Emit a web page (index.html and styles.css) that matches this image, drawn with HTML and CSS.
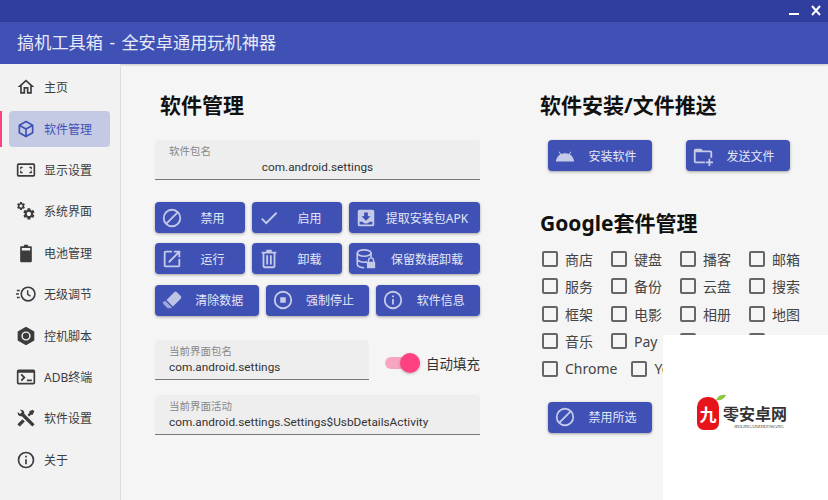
FILE: index.html
```html
<!DOCTYPE html>
<html lang="zh-CN">
<head>
  <meta charset="UTF-8">
  <title>搞机工具箱</title>
  <link rel="stylesheet" href="styles.css">
</head>
<body>

  <svg class="sprite" aria-hidden="true">
    <symbol id="i-home" viewBox="0 0 24 24"><path d="M12 5.69l5 4.5V18h-2v-6H9v6H7v-7.81l5-4.5M12 3L2 12h3v8h6v-6h2v6h6v-8h3L12 3z"/></symbol>
    <symbol id="i-cube" viewBox="0 0 24 24"><path d="M21,16.5C21,16.88 20.79,17.21 20.47,17.38L12.57,21.82C12.41,21.94 12.21,22 12,22C11.79,22 11.59,21.94 11.43,21.82L3.53,17.38C3.21,17.21 3,16.88 3,16.5V7.5C3,7.12 3.21,6.79 3.53,6.62L11.43,2.18C11.59,2.06 11.79,2 12,2C12.21,2 12.41,2.06 12.57,2.18L20.47,6.62C20.79,6.79 21,7.12 21,7.5V16.5M12,4.15L6.04,7.5L12,10.85L17.96,7.5L12,4.15M5,15.91L11,19.29V12.58L5,9.21V15.91M19,15.91V9.21L13,12.58V19.29L19,15.91Z"/></symbol>
    <symbol id="i-screen" viewBox="0 0 24 24"><path d="M3 4h18a2 2 0 0 1 2 2v12a2 2 0 0 1-2 2H3a2 2 0 0 1-2-2V6a2 2 0 0 1 2-2zm0 2v12h18V6H3z"/><path d="M5 8h3v1.500H6.500V11H5zM19 8h-3v1.500h1.500V11H19zM5 16h3v-1.500H6.500V13H5zM19 16h-3v-1.500h1.500V13H19z"/></symbol>
    <symbol id="i-cog" viewBox="0 0 24 24"><path d="M19.140 12.940c.04-.3.06-.61.06-.94 0-.32-.02-.64-.07-.94l2.030-1.580a.49.49 0 0 0 .12-.61l-1.920-3.320a.488.488 0 0 0-.59-.22l-2.390.96c-.5-.38-1.030-.7-1.620-.94l-.36-2.540a.484.484 0 0 0-.48-.41h-3.840c-.24 0-.43.17-.47.41l-.36 2.540c-.59.24-1.130.57-1.620.94l-2.390-.96c-.22-.08-.47 0-.59.22L2.740 8.870c-.12.21-.08.47.12.61l2.030 1.580c-.05.3-.09.63-.09.94s.02.64.07.94l-2.030 1.580a.49.49 0 0 0-.12.61l1.920 3.320c.12.22.37.29.59.22l2.390-.96c.5.38 1.030.7 1.620.94l.36 2.540c.05.24.24.41.48.41h3.840c.24 0 .44-.17.47-.41l.36-2.540c.59-.24 1.130-.56 1.620-.94l2.390.96c.22.08.47 0 .59-.22l1.920-3.320c.12-.22.07-.47-.12-.61l-2.010-1.580zM12 15.600c-1.980 0-3.600-1.620-3.600-3.600s1.620-3.600 3.600-3.600 3.600 1.620 3.600 3.600-1.620 3.600-3.600 3.600z"/></symbol>
    <symbol id="i-cogs" viewBox="0 0 24 24"><use href="#i-cog" x="0" y="0" width="12" height="12"/><use href="#i-cog" x="7" y="7" width="17" height="17"/></symbol>
    <symbol id="i-battery" viewBox="0 0 24 24"><path d="M9.500 2h5v2H18a1 1 0 0 1 1 1v17a1 1 0 0 1-1 1H6a1 1 0 0 1-1-1V5a1 1 0 0 1 1-1h3.500zM7 6v3h10V6z"/></symbol>
    <symbol id="i-timer" viewBox="0 0 24 24"><circle cx="14.500" cy="12" r="8.200" fill="none" stroke="currentColor" stroke-width="1.900"/><path d="M14 7.500v5l3.500 2.200" fill="none" stroke="currentColor" stroke-width="1.700"/><path d="M1 7h3.500v1.800H1zM0 11.100h3.500v1.800H0zM1 15.200h3.500V17H1z"/></symbol>
    <symbol id="i-hex" viewBox="0 0 24 24"><path d="M12 1l10 5.500v11L12 23 2 17.500v-11zm0 5.500a5.500 5.500 0 1 0 0 11 5.500 5.500 0 0 0 0-11z"/><circle cx="12" cy="12" r="3.800"/></symbol>
    <symbol id="i-console" viewBox="0 0 24 24"><path d="M3 3h18a2 2 0 0 1 2 2v14a2 2 0 0 1-2 2H3a2 2 0 0 1-2-2V5a2 2 0 0 1 2-2zm0 4v12h18V7z"/><path d="M5.500 9.500L7 8l4.500 4.500L7 17l-1.500-1.500 3-3zM13 15h6v2h-6z"/></symbol>
    <symbol id="i-tools" viewBox="0 0 24 24"><path d="M21.710 20.290L20.290 21.710A1 1 0 0 1 18.880 21.710L7 9.850A3.810 3.810 0 0 1 6 10A4 4 0 0 1 2.220 4.700L4.760 7.240L5.290 6.710L6.710 5.290L7.240 4.760L4.700 2.220A4 4 0 0 1 10 6A3.810 3.810 0 0 1 9.850 7L21.710 18.880A1 1 0 0 1 21.710 20.290M2.290 18.880A1 1 0 0 0 2.290 20.290L3.710 21.710A1 1 0 0 0 5.120 21.710L10.590 16.250L7.760 13.420M20 2L16 4V6L13.830 8.170L15.830 10.170L18 8H20L22 4Z"/></symbol>
    <symbol id="i-info" viewBox="0 0 24 24"><path d="M11 7h2v2h-2zm0 4h2v6h-2zm1-9a10 10 0 1 0 0 20 10 10 0 0 0 0-20zm0 18a8 8 0 1 1 0-16 8 8 0 0 1 0 16z"/></symbol>
    <symbol id="i-ban" viewBox="0 0 24 24"><path d="M12 2a10 10 0 1 0 0 20 10 10 0 0 0 0-20zM4 12c0-4.400 3.600-8 8-8 1.800 0 3.600.6 4.900 1.700L5.700 16.900C4.600 15.600 4 13.800 4 12zm8 8c-1.800 0-3.600-.6-4.900-1.700L18.300 7.100c1.100 1.300 1.700 3.100 1.700 4.900 0 4.400-3.600 8-8 8z"/></symbol>
    <symbol id="i-check" viewBox="0 0 24 24"><path d="M9 16.170L4.830 12l-1.420 1.410L9 19 21 7l-1.410-1.410z"/></symbol>
    <symbol id="i-tray" viewBox="0 0 24 24"><path fill-rule="evenodd" d="M5 3h14a2 2 0 0 1 2 2v14a2 2 0 0 1-2 2H5a2 2 0 0 1-2-2V5a2 2 0 0 1 2-2zm5 3v4H7l5 5 5-5h-3V6zM5 16v3h14v-3h-3c-.8 1.200-2.300 2-4 2s-3.200-.8-4-2z"/></symbol>
    <symbol id="i-open" viewBox="0 0 24 24"><path d="M19 19H5V5h7V3H5a2 2 0 0 0-2 2v14c0 1.100.9 2 2 2h14c1.100 0 2-.9 2-2v-7h-2v7zM14 3v2h3.590l-9.830 9.830 1.410 1.410L19 6.410V10h2V3h-7z"/></symbol>
    <symbol id="i-trash" viewBox="0 0 24 24"><path d="M9 2h6v2h5v2h-1v14a2 2 0 0 1-2 2H7a2 2 0 0 1-2-2V6H4V4h5zM7 6v14h10V6zm2 2h2v10H9zm4 0h2v10h-2z"/></symbol>
    <symbol id="i-dblock" viewBox="0 0 24 24"><ellipse cx="10" cy="5.500" rx="7.500" ry="3.500" fill="none" stroke="currentColor" stroke-width="1.800"/><path d="M2.500 5.500v12.500c0 1.900 3.400 3.500 7.500 3.500M2.500 12c0 1.900 3.400 3.500 7.500 3.500 1 0 2-.1 3-.3M17.500 5.500V10" fill="none" stroke="currentColor" stroke-width="1.800"/><path d="M14 15v-1.500a3.500 3.500 0 0 1 7 0V15h1v7H13v-7zm1.500 0h4v-1.500a2 2 0 0 0-4 0z"/></symbol>
    <symbol id="i-eraser" viewBox="0 0 24 24"><path d="M14.500 3.500a2 2 0 0 1 2.800 0l4.200 4.200a2 2 0 0 1 0 2.800L13 19l-7-7z" opacity=".95"/><path d="M5 13l6.800 6.800-1.200 1.200H8a2 2 0 0 1-1.400-.6l-4-4a2 2 0 0 1 0-2.800z" opacity=".7"/></symbol>
    <symbol id="i-stop" viewBox="0 0 24 24"><path d="M12 2a10 10 0 1 0 0 20 10 10 0 0 0 0-20zm0 18a8 8 0 1 1 0-16 8 8 0 0 1 0 16zM9 9h6v6H9z"/></symbol>
    <symbol id="i-android" viewBox="0 0 24 24"><path d="M2 18c.3-3.300 2-6 4.700-7.700L5.200 7.700l.8-.5 1.600 2.700A10.800 10.800 0 0 1 12 9c1.600 0 3 .3 4.400.9L18 7.200l.8.5-1.500 2.600C20 12 21.700 14.700 22 18z"/></symbol>
    <symbol id="i-folder" viewBox="0 0 24 24"><path d="M4 4h6l2 2h8a2 2 0 0 1 2 2v6h-2V8H4v10h10v2H4a2 2 0 0 1-2-2V6a2 2 0 0 1 2-2z"/><path d="M18 15h2v3h3v2h-3v3h-2v-3h-3v-2h3z"/></symbol>
  </svg>

  <div class="titlebar">
    <svg class="win-btn" viewBox="0 0 12 12"><path d="M1 9h10" /></svg>
    <svg class="win-btn" viewBox="0 0 12 12"><path d="M2 1l8 9M10 1l-8 9" /></svg>
  </div>
  <header class="appbar">搞机工具箱 - 全安卓通用玩机神器</header>

  <div class="app">
    <ul class="nav">
      <li class="nav-item"><a><svg class="nav-icon"><use href="#i-home"/></svg>主页</a></li>
      <li class="nav-item active"><a><svg class="nav-icon"><use href="#i-cube"/></svg>软件管理</a></li>
      <li class="nav-item"><a><svg class="nav-icon"><use href="#i-screen"/></svg>显示设置</a></li>
      <li class="nav-item"><a><svg class="nav-icon"><use href="#i-cogs"/></svg>系统界面</a></li>
      <li class="nav-item"><a><svg class="nav-icon"><use href="#i-battery"/></svg>电池管理</a></li>
      <li class="nav-item"><a><svg class="nav-icon"><use href="#i-timer"/></svg>无级调节</a></li>
      <li class="nav-item"><a><svg class="nav-icon"><use href="#i-hex"/></svg>控机脚本</a></li>
      <li class="nav-item"><a><svg class="nav-icon"><use href="#i-console"/></svg>ADB终端</a></li>
      <li class="nav-item"><a><svg class="nav-icon"><use href="#i-tools"/></svg>软件设置</a></li>
      <li class="nav-item"><a><svg class="nav-icon"><use href="#i-info"/></svg>关于</a></li>
    </ul>

    <main class="content">
      <section class="col-left">
        <h2 class="heading heading-left">软件管理</h2>

        <div class="field field-center">
          <label>软件包名</label>
          <div class="field-value">com.android.settings</div>
        </div>

        <div class="btn-grid">
          <div class="btn-row btn-row-a">
            <button class="btn"><svg class="btn-icon"><use href="#i-ban"/></svg><span>禁用</span></button>
            <button class="btn"><svg class="btn-icon"><use href="#i-check"/></svg><span>启用</span></button>
            <button class="btn"><svg class="btn-icon"><use href="#i-tray"/></svg><span>提取安装包APK</span></button>
          </div>
          <div class="btn-row btn-row-a">
            <button class="btn"><svg class="btn-icon"><use href="#i-open"/></svg><span>运行</span></button>
            <button class="btn"><svg class="btn-icon"><use href="#i-trash"/></svg><span>卸载</span></button>
            <button class="btn"><svg class="btn-icon"><use href="#i-dblock"/></svg><span>保留数据卸载</span></button>
          </div>
          <div class="btn-row btn-row-b">
            <button class="btn"><svg class="btn-icon"><use href="#i-eraser"/></svg><span>清除数据</span></button>
            <button class="btn"><svg class="btn-icon"><use href="#i-stop"/></svg><span>强制停止</span></button>
            <button class="btn"><svg class="btn-icon"><use href="#i-info"/></svg><span>软件信息</span></button>
          </div>
        </div>

        <div class="field-row">
          <div class="field field-short">
            <label>当前界面包名</label>
            <div class="field-value">com.android.settings</div>
          </div>
          <div class="switch"><span class="switch-track"><span class="switch-thumb"></span></span>自动填充</div>
        </div>

        <div class="field">
          <label>当前界面活动</label>
          <div class="field-value">com.android.settings.Settings$UsbDetailsActivity</div>
        </div>
      </section>

      <section class="col-right">
        <h2 class="heading">软件安装/文件推送</h2>
        <div class="install-row">
          <button class="btn btn-wide"><svg class="btn-icon"><use href="#i-android"/></svg><span>安装软件</span></button>
          <button class="btn btn-wide"><svg class="btn-icon"><use href="#i-folder"/></svg><span>发送文件</span></button>
        </div>

        <h2 class="heading heading-google">Google套件管理</h2>
        <div class="checks">
          <label class="check"><i></i>商店</label>
          <label class="check"><i></i>键盘</label>
          <label class="check"><i></i>播客</label>
          <label class="check"><i></i>邮箱</label>
          <label class="check"><i></i>服务</label>
          <label class="check"><i></i>备份</label>
          <label class="check"><i></i>云盘</label>
          <label class="check"><i></i>搜索</label>
          <label class="check"><i></i>框架</label>
          <label class="check"><i></i>电影</label>
          <label class="check"><i></i>相册</label>
          <label class="check"><i></i>地图</label>
          <label class="check"><i></i>音乐</label>
          <label class="check"><i></i>Pay</label>
          <label class="check"><i></i>日历</label>
          <label class="check"><i></i>翻译</label>
        </div>
        <div class="checks-wide">
          <label class="check"><i></i>Chrome</label>
          <label class="check"><i></i>YouTube</label>
        </div>
        <button class="btn btn-wide btn-last"><svg class="btn-icon"><use href="#i-ban"/></svg><span>禁用所选</span></button>
      </section>
    </main>
  </div>

  <!-- watermark pasted over the corner of the screenshot -->
  <div class="watermark">
    <div class="wm-badge">九<svg class="wm-leaf" viewBox="0 0 12 8"><path d="M0 7C2 2 7 0 12 1 10 6 5 8 0 7z"/></svg></div>
    <div class="wm-text">
      <div class="wm-name">零安卓网</div>
      <div class="wm-sub">JIULINGANZHUOWANG</div>
    </div>
  </div>

</body>
</html>
```

FILE: styles.css
```css
* {
  box-sizing: border-box;
}

html, body {
  height: 500px;
}

body {
  font-family: "Noto Sans", "Noto Sans CJK SC", sans-serif;
  background: #f5f5f5;
  color: #333;
  margin: 0;
  overflow: hidden;
  position: relative;
}

.sprite {
  display: none;
}

.titlebar {
  height: 22px;
  background: #303f9f;
  display: flex;
  justify-content: flex-end;
  align-items: center;
  gap: 10px;
  padding-right: 6px;
}

.win-btn {
  width: 12px;
  height: 12px;
  fill: none;
  stroke: #fff;
  stroke-width: 2;
}

.appbar {
  height: 42px;
  background: #3f51b5;
  color: #e8eaf6;
  font-size: 17.2px;
  line-height: 42px;
  word-spacing: 2px;
  padding-left: 17px;
  box-shadow: 0 1px 2px rgba(0,0,0,0.2);
}

.app {
  display: flex;
  height: 436px;
}

/* left menu */
.nav {
  list-style: none;
  margin: 0;
  padding: 5.2px 0 0;
  width: 121px;
  flex: none;
  background: #f2f2f2;
  border-right: 1px solid #dedede;
  display: flex;
  flex-direction: column;
  gap: 5.4px;
}

.nav-item {
  display: flex;
  gap: 7px;
  height: 36px;
}

.nav-item::before {
  content: "";
  width: 2px;
}

.nav-item a {
  width: 101px;
  display: flex;
  align-items: center;
  gap: 8px;
  padding-left: 7px;
  font-size: 12px;
  color: #3c3c3c;
  border-radius: 4px;
}

.nav-icon {
  width: 20px;
  height: 20px;
  fill: currentColor;
  flex: none;
}

.nav-item.active::before {
  background: #ff4081;
}

.nav-item.active a {
  background: #c5cae4;
  color: #3f51b5;
}

/* main area */
.content {
  flex: 1;
  display: flex;
  gap: 60px;
  padding-left: 34px;
}

.col-left {
  width: 325px;
  flex: none;
}

.col-right {
  flex: 1;
}

.heading {
  font-size: 21px;
  line-height: 30px;
  font-weight: 700;
  color: #111;
  margin: 26px 0 20px;
}

.heading-left {
  margin-left: 5px;
}

.heading-google {
  margin: 37px 0 7px;
}

.field {
  height: 40px;
  background: #eee;
  border-bottom: 1px solid #777;
  border-radius: 4px 4px 0 0;
  padding: 4px 14px 0;
  margin-bottom: 15px;
}

.field label {
  display: block;
  font-size: 10.5px;
  line-height: 14px;
  color: #888;
}

.field-value {
  font-family: Roboto, "Noto Sans CJK SC", sans-serif;
  font-size: 11.8px;
  line-height: 19px;
  color: #333;
}

.field-center .field-value {
  text-align: center;
}

.field-center {
  margin-bottom: 22px;
}

.field-short {
  width: 214px;
  flex: none;
  margin-bottom: 0;
}

.field-row {
  display: flex;
  align-items: center;
  gap: 16px;
  margin: 24px 0 15px;
}

.switch {
  display: flex;
  align-items: center;
  gap: 6px;
  font-size: 13.5px;
  color: #333;
  white-space: nowrap;
  margin-top: 6px;
}

.switch-track {
  display: flex;
  justify-content: flex-end;
  align-items: center;
  width: 35px;
  height: 12px;
  background: #f8a5c2;
  border-radius: 6px;
}

.switch-thumb {
  width: 20px;
  height: 20px;
  background: #ff4081;
  border-radius: 50%;
  box-shadow: 0 1px 3px rgba(0,0,0,0.25);
}

.btn-grid {
  display: flex;
  flex-direction: column;
  gap: 10.4px;
}

.btn-row {
  display: grid;
  gap: 7px;
}

.btn-row-a {
  grid-template-columns: 90px 90px 1fr;
}

.btn-row-b {
  grid-template-columns: 1fr 1fr 1fr;
}

.btn {
  height: 31px;
  display: flex;
  align-items: center;
  padding: 0 0 0 6px;
  background: #3f51b5;
  color: #e4e7f6;
  font-family: inherit;
  font-size: 12px;
  border: none;
  border-radius: 4px;
  box-shadow: 0 1px 3px rgba(0,0,0,0.35);
  white-space: nowrap;
}

.btn span {
  flex: 1;
  text-align: center;
}

.btn-icon {
  width: 22px;
  height: 22px;
  margin-right: -3px;
  fill: #c5cae9;
  color: #c5cae9;
  flex: none;
}

.btn-wide {
  width: 104px;
}

.install-row {
  display: flex;
  gap: 34px;
  margin-left: 8px;
}

.checks {
  display: grid;
  grid-template-columns: repeat(4, 69px);
  grid-auto-rows: 27.5px;
  margin-left: 2px;
}

.checks-wide {
  display: flex;
  gap: 14px;
  height: 27.5px;
  margin-left: 2px;
}

.check {
  display: flex;
  align-items: center;
  gap: 7px;
  font-size: 14px;
  color: #444;
}

.check i {
  width: 16px;
  height: 16px;
  border: 2px solid #666;
  border-radius: 2px;
  flex: none;
}

.btn-last {
  margin: 19px 0 0 8px;
}

/* watermark */
.watermark {
  position: absolute;
  right: 0;
  bottom: 0;
  width: 165px;
  height: 165px;
  background: #fff;
  display: flex;
  align-items: flex-start;
  gap: 4px;
  padding: 62px 0 0 34px;
}

.wm-badge {
  position: relative;
  width: 22px;
  height: 33px;
  background: #e8141c;
  border-radius: 10px 10px 7px 7px;
  color: #fff;
  font-family: "Noto Sans CJK SC", sans-serif;
  font-size: 17px;
  font-weight: 700;
  line-height: 33px;
  text-align: center;
}

.wm-leaf {
  position: absolute;
  top: -3px;
  right: -7px;
  width: 10px;
  height: 7px;
  fill: #8cc63f;
}

.wm-name {
  font-family: "Noto Sans CJK SC", sans-serif;
  font-size: 16px;
  font-weight: 700;
  line-height: 18px;
  color: #333;
  margin-top: 7px;
  white-space: nowrap;
}

.wm-sub {
  font-family: "Liberation Serif", serif;
  font-size: 4.5px;
  line-height: 6px;
  color: #333;
  margin: 2px 0 0 11px;
  white-space: nowrap;
}
```
